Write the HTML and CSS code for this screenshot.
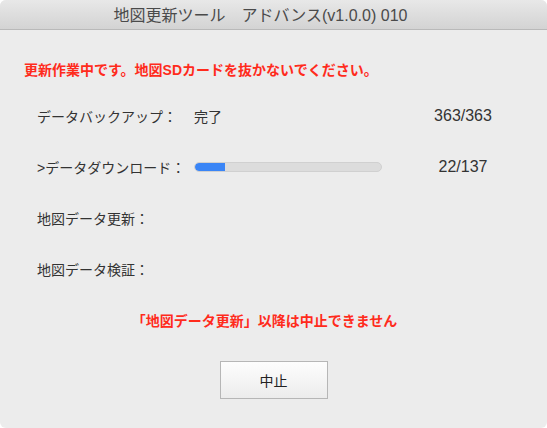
FILE: index.html
```html
<!DOCTYPE html>
<html lang="ja">
<head>
    <meta charset="UTF-8">
    <meta name="viewport" content="width=device-width, initial-scale=1.0">
    <title>地図更新ツール</title>
    <link rel="stylesheet" href="styles.css">
</head>
<body>
    <div class="window">
        <div class="titlebar">地図更新ツール　アドバンス(v1.0.0) 010</div>

        <div class="content">
            <div class="warning">更新作業中です。地図SDカードを抜かないでください。</div>

            <div class="rows">
                <div class="row">
                    <div class="label">データバックアップ：</div>
                    <div class="status">完了</div>
                    <div class="count">363/363</div>
                </div>
                <div class="row">
                    <div class="label">&gt;データダウンロード：</div>
                    <div class="status">
                        <div class="progress"><div class="progress-fill" style="width: 16%"></div></div>
                    </div>
                    <div class="count">22/137</div>
                </div>
                <div class="row">
                    <div class="label">地図データ更新：</div>
                    <div class="status"></div>
                    <div class="count"></div>
                </div>
                <div class="row">
                    <div class="label">地図データ検証：</div>
                    <div class="status"></div>
                    <div class="count"></div>
                </div>
            </div>

            <div class="note">「地図データ更新」以降は中止できません</div>

            <div class="actions">
                <button class="btn">中止</button>
            </div>
        </div>
    </div>
</body>
</html>
```

FILE: styles.css
```css
body {
    margin: 0;
    padding: 0;
    background-color: #ffffff;
    font-family: "Liberation Sans", "Noto Sans CJK JP", sans-serif;
}
.window {
    width: 547px;
    height: 428px;
    background-color: #ececec;
    border-radius: 6px;
    overflow: hidden;
}
.titlebar {
    height: 29px;
    line-height: 31px;
    padding-right: 26px;
    text-align: center;
    font-size: 16px;
    color: #4a4a4a;
    background: linear-gradient(#e8e8e8, #d3d3d3);
    border-bottom: 1px solid #b9b9b9;
}
.content {
    padding-top: 30px;
}
.warning {
    padding-left: 24px;
    font-size: 14px;
    line-height: 20px;
    font-weight: bold;
    color: #ff2b1c;
}
.rows {
    margin-top: 10px;
    padding-left: 37px;
}
.row {
    display: grid;
    grid-template-columns: 157px 223px 92px;
    align-items: center;
    height: 51px;
    font-size: 14px;
    color: #333333;
}
.count {
    text-align: center;
    font-size: 16px;
}
.progress {
    width: 186px;
    height: 8px;
    border: 1px solid #d0d0d0;
    border-radius: 5px;
    background-color: #dcdcdc;
    overflow: hidden;
}
.progress-fill {
    height: 100%;
    background-color: #3a85f6;
    border-radius: 5px 0 0 5px;
}
.note {
    margin-top: 17px;
    padding-right: 18px;
    text-align: center;
    font-size: 14px;
    line-height: 20px;
    font-weight: bold;
    color: #ff2b1c;
}
.actions {
    margin-top: 30px;
    text-align: center;
}
.btn {
    width: 108px;
    height: 38px;
    font-family: inherit;
    font-size: 14px;
    color: #222222;
    background: linear-gradient(#fdfdfd, #ececec);
    border: 1px solid #b6b6b6;
    border-radius: 0;
}
```
